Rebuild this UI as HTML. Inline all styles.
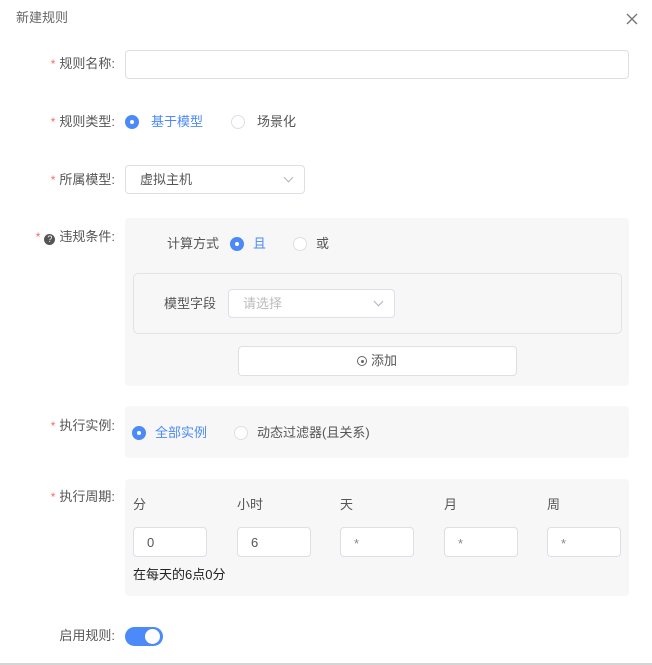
<!DOCTYPE html>
<html><head><meta charset="utf-8"><style>
*{box-sizing:border-box;margin:0;padding:0}
body{width:652px;height:665px;background:#fff;position:relative;overflow:hidden;font-family:"Liberation Sans","Noto Sans CJK SC",sans-serif;font-size:13px;color:#555}
.a{position:absolute;white-space:nowrap;line-height:16px}
.lab{position:absolute;right:537px;white-space:nowrap;line-height:16px;color:#555}
.lab b{color:#f56c6c;font-weight:normal;margin-right:4px;font-size:12px}
.inp{position:absolute;background:#fff;border:1px solid #dcdfe6;border-radius:4px}
.panel{position:absolute;background:#f7f7f7;border-radius:4px}
.r{position:absolute;width:14px;height:14px;border-radius:50%;border:1px solid #dcdfe6;background:#fff}
.r.on{background:#4b8af8;border-color:#4b8af8}
.r.on:after{content:"";position:absolute;left:4px;top:4px;width:4px;height:4px;border-radius:50%;background:#fff}
.blue{color:#4b8af8}
.chev{position:absolute;width:7px;height:7px;border-right:1px solid #b0b4bb;border-bottom:1px solid #b0b4bb;transform:rotate(45deg)}
</style></head><body>
<div class="a" style="left:16px;top:10px;color:#666;font-size:13px">新建规则</div>
<svg style="position:absolute;left:626px;top:13px" width="12" height="12"><path d="M1 1L11 11M11 1L1 11" stroke="#777" stroke-width="1.4"/></svg>

<div class="lab" style="top:56px"><b>*</b>规则名称:</div>
<div class="inp" style="left:125px;top:50px;width:504px;height:29px"></div>

<div class="lab" style="top:114px"><b>*</b>规则类型:</div>
<div class="r on" style="left:125px;top:115px"></div>
<div class="a blue" style="left:151px;top:114px">基于模型</div>
<div class="r" style="left:231px;top:115px"></div>
<div class="a" style="left:257px;top:114px">场景化</div>

<div class="lab" style="top:172px"><b>*</b>所属模型:</div>
<div class="inp" style="left:125px;top:165px;width:180px;height:29px"></div>
<div class="a" style="left:140px;top:172px;color:#555">虚拟主机</div>
<div class="chev" style="left:285px;top:174px"></div>

<div class="lab" style="top:229px"><b>*</b><span style="display:inline-block;width:11px;height:11px;border-radius:50%;background:#555;color:#fff;font-size:9px;line-height:11px;text-align:center;margin-right:4px;vertical-align:-1px">?</span>违规条件:</div>
<div class="panel" style="left:125px;top:218px;width:504px;height:168px"></div>
<div class="a" style="left:167px;top:236px">计算方式</div>
<div class="r on" style="left:230px;top:237px"></div>
<div class="a blue" style="left:253px;top:236px">且</div>
<div class="r" style="left:293px;top:237px"></div>
<div class="a" style="left:316px;top:236px">或</div>
<div style="position:absolute;left:133px;top:273px;width:489px;height:61px;border:1px solid #e3e3e3;border-radius:5px"></div>
<div class="a" style="left:164px;top:296px">模型字段</div>
<div class="inp" style="left:228px;top:289px;width:167px;height:29px"></div>
<div class="a" style="left:243px;top:296px;color:#bbb">请选择</div>
<div class="chev" style="left:375px;top:298px"></div>
<div class="inp" style="left:238px;top:346px;width:279px;height:30px"></div>
<div class="a" style="left:357px;top:353px;color:#555"><span style="display:inline-block;width:10px;height:10px;border:1px solid #666;border-radius:50%;position:relative;vertical-align:-1px;margin-right:4px"><span style="position:absolute;left:2.5px;top:2.5px;width:3px;height:3px;background:#666;border-radius:50%"></span></span>添加</div>

<div class="lab" style="top:418px"><b>*</b>执行实例:</div>
<div class="panel" style="left:125px;top:406px;width:504px;height:52px"></div>
<div class="r on" style="left:132px;top:426px"></div>
<div class="a blue" style="left:155px;top:425px">全部实例</div>
<div class="r" style="left:234px;top:426px"></div>
<div class="a" style="left:257px;top:425px">动态过滤器(且关系)</div>

<div class="lab" style="top:489px"><b>*</b>执行周期:</div>
<div class="panel" style="left:125px;top:479px;width:504px;height:117px"></div>
<div class="a" style="left:133px;top:497px">分</div>
<div class="a" style="left:237px;top:497px">小时</div>
<div class="a" style="left:340px;top:497px">天</div>
<div class="a" style="left:444px;top:497px">月</div>
<div class="a" style="left:547px;top:497px">周</div>
<div class="inp" style="left:133px;top:527px;width:74px;height:30px"></div>
<div class="inp" style="left:237px;top:527px;width:74px;height:30px"></div>
<div class="inp" style="left:340px;top:527px;width:74px;height:30px"></div>
<div class="inp" style="left:444px;top:527px;width:74px;height:30px"></div>
<div class="inp" style="left:547px;top:527px;width:74px;height:30px"></div>
<div class="a" style="left:147px;top:535px">0</div>
<div class="a" style="left:251px;top:535px">6</div>
<div class="a" style="left:354px;top:536px;color:#888">*</div>
<div class="a" style="left:458px;top:536px;color:#888">*</div>
<div class="a" style="left:561px;top:536px;color:#888">*</div>
<div class="a" style="left:133px;top:567px;color:#222">在每天的6点0分</div>

<div class="lab" style="top:628px">启用规则:</div>
<div style="position:absolute;left:125px;top:627px;width:38px;height:19px;border-radius:10px;background:#4b8af8"></div>
<div style="position:absolute;left:145px;top:629px;width:15px;height:15px;border-radius:50%;background:#fff"></div>
<div style="position:absolute;left:0;top:663px;width:652px;height:2px;background:#d5d5d5"></div>
</body></html>
